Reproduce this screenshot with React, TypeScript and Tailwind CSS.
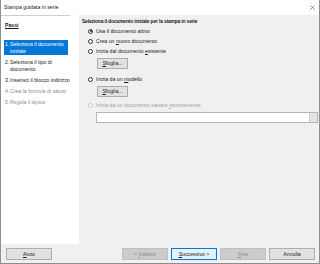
import type {ReactNode} from 'react';

const steps: {n: string; lines: string[]; active?: boolean; disabled?: boolean}[] = [
  {n: '1.', lines: ['Seleziona il documento', 'iniziale'], active: true},
  {n: '2.', lines: ['Seleziona il tipo di', 'documento']},
  {n: '3.', lines: ['Inserisci il blocco indirizzo']},
  {n: '4.', lines: ['Crea la formula di saluto'], disabled: true},
  {n: '5.', lines: ['Regola il layout'], disabled: true}
];

function Radio({checked, disabled, children}: {checked?: boolean; disabled?: boolean; children: ReactNode}) {
  return (
    <div className={`ml-[6px] flex h-[7px] items-center gap-[3px] ${disabled ? 'text-[#a0a0a0]' : ''}`}>
      <span
        className={`flex h-[5px] w-[5px] shrink-0 items-center justify-center rounded-full border-[0.6px] bg-white ${disabled ? 'border-[#c4c4c4]' : 'border-[#333333]'}`}
      >
        {checked && <span className="h-[2px] w-[2px] rounded-full bg-[#222222]" />}
      </span>
      <span className="whitespace-nowrap">{children}</span>
    </div>
  );
}

function Browse() {
  return (
    <button
      type="button"
      className="ml-[15px] flex h-[11px] w-[31px] items-center justify-center border-[0.6px] border-[#adadad] bg-[#e1e1e1] text-[#1a1a1a]"
    >
      <span><span className="underline">S</span>foglia...</span>
    </button>
  );
}

function FooterButton({children, variant}: {children: ReactNode; variant?: 'default' | 'disabled'}) {
  const look =
    variant === 'default'
      ? 'border-[#0078d7] bg-[#e5f1fb] text-[#1a1a1a]'
      : variant === 'disabled'
        ? 'border-[#bfbfbf] bg-[#cccccc] text-[#8a8a8a]'
        : 'border-[#adadad] bg-[#e1e1e1] text-[#1a1a1a]';
  return (
    <button type="button" className={`flex h-[12px] w-[46px] items-center justify-center border-[0.6px] ${look}`}>
      {children}
    </button>
  );
}

export default function App() {
  return (
    <div className="flex h-[264px] w-[320px] flex-col overflow-hidden border border-t-0 border-[#8e8e8e] bg-[#f0f0f0] font-['Liberation_Sans',Arial,sans-serif] text-[5.2px] leading-[7px] text-[#1a1a1a]">
      <div className="flex h-[15px] shrink-0 items-center justify-between bg-white pl-[3px] pr-[4px]">
        <span className="text-[#222222]">Stampa guidata in serie</span>
        <svg width="5" height="5" viewBox="0 0 10 10" className="text-[#444444]">
          <path d="M1 1 L9 9 M9 1 L1 9" stroke="currentColor" strokeWidth="1.2" />
        </svg>
      </div>

      <div className="flex min-h-0 flex-1">
        <div className="flex w-[78px] shrink-0 flex-col bg-white">
          <div className="h-px w-[69px] bg-[#cfcfcf]" />
          <div className="pl-[4px] pt-[5.5px] font-bold underline">Passi</div>
          <ul className="mt-[11.5px] flex flex-col gap-[3px] pl-[3px]">
            {steps.map((s) => (
              <li
                key={s.n}
                className={`flex w-[64px] py-[0.5px] pl-[1px] whitespace-nowrap ${s.active ? 'bg-[#0078d7] text-white' : s.disabled ? 'text-[#8d8d8d]' : 'text-[#1a1a1a]'}`}
              >
                <span className="w-[5px] shrink-0">{s.n}</span>
                <span className="flex flex-col">
                  {s.lines.map((l) => (
                    <span key={l}>{l}</span>
                  ))}
                </span>
              </li>
            ))}
          </ul>
        </div>

        <div className="flex min-w-0 flex-1 flex-col pl-[3px] pr-[1px] pt-[2.5px]">
          <div className="text-[4.9px] font-bold tracking-[-0.15px] whitespace-nowrap">
            Seleziona il documento iniziale per la stampa in serie
          </div>
          <div className="mt-[3px] flex flex-col gap-[3px]">
            <Radio checked>Usa il documento attivo</Radio>
            <Radio>Crea un <span className="underline">n</span>uovo documento</Radio>
            <Radio>Inizia dal documento <span className="underline">e</span>sistente</Radio>
          </div>
          <div className="mt-[3.5px]">
            <Browse />
          </div>
          <div className="mt-[6.5px]">
            <Radio>Inizia da un <span className="underline">m</span>odello</Radio>
          </div>
          <div className="mt-[3.5px]">
            <Browse />
          </div>
          <div className="mt-[4.5px]">
            <Radio disabled>Inizia da un documento salvato <span className="underline">r</span>ecentemente</Radio>
          </div>
          <div className="ml-[14px] mt-[3.5px] flex h-[11px] border-[0.6px] border-[#b5b5b5] bg-white">
            <div className="flex-1" />
            <div className="w-[8px] border-l-[0.6px] border-[#d0d0d0] bg-[#e4e4e4]" />
          </div>
        </div>
      </div>

      <div className="flex h-[19px] shrink-0 items-start justify-between pl-[5px] pr-[4px] pt-[4px]">
        <FooterButton>
          <span><span className="underline">A</span>iuto</span>
        </FooterButton>
        <div className="flex gap-[3px]">
          <FooterButton variant="disabled">
            <span>&lt; <span className="underline">I</span>ndietro</span>
          </FooterButton>
          <FooterButton variant="default">
            <span><span className="underline">S</span>uccessivo &gt;</span>
          </FooterButton>
          <FooterButton variant="disabled">
            <span><span className="underline">F</span>ine</span>
          </FooterButton>
          <FooterButton>Annulla</FooterButton>
        </div>
      </div>
    </div>
  );
}
